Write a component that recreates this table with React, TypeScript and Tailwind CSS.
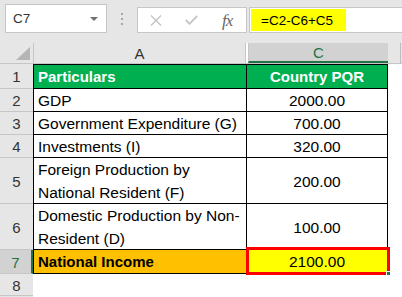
const GRID = 'border-[#c6c6c6]';

function RowHead({ n, h, active }: { n?: number; h: string; active?: boolean }) {
  return (
    <div
      className={`${h} w-[33px] shrink-0 flex items-center justify-center pt-[1px] text-[15px] border-b ${GRID} ${
        active ? 'bg-[#d2d2d2] text-[#217346] border-r-2 border-r-[#217346]' : 'bg-[#e6e6e6] text-[#333]'
      }`}
    >
      {n}
    </div>
  );
}

const body = [
  { n: 2, h: 'h-[23px]', a: ['GDP'], c: '2000.00' },
  { n: 3, h: 'h-[23px]', a: ['Government Expenditure (G)'], c: '700.00' },
  { n: 4, h: 'h-[23px]', a: ['Investments (I)'], c: '320.00' },
  { n: 5, h: 'h-[46px]', a: ['Foreign Production by', 'National Resident (F)'], c: '200.00' },
  { n: 6, h: 'h-[46px]', a: ['Domestic Production by Non-', 'Resident (D)'], c: '100.00' },
];

export default function App() {
  return (
    <div className="w-[402px] h-[297px] overflow-hidden bg-white font-['Liberation_Sans',Arial,sans-serif] text-[15.5px] leading-[23px] text-black">
      {/* formula bar */}
      <div className="h-[43px] bg-[#e6e6e6] flex items-start text-[13.5px]">
        <div className="ml-[5px] mt-[4px] w-[102px] h-[29px] bg-white border border-[#c6c6c6] flex items-center justify-between pl-[7px] pr-[8px] text-[#333]">
          <span>C7</span>
          <svg width="8" height="4" viewBox="0 0 8 4">
            <path d="M0 0 L8 0 L4 4 Z" fill="#707070" />
          </svg>
        </div>
        <div className="w-[30px] h-[29px] mt-[4px] flex flex-col items-center justify-center gap-[3px]">
          <div className="w-[2px] h-[2px] bg-[#a6a6a6]" />
          <div className="w-[2px] h-[2px] bg-[#a6a6a6]" />
          <div className="w-[2px] h-[2px] bg-[#a6a6a6]" />
        </div>
        <div className="mt-[7px] w-[110px] h-[26px] bg-white border border-[#c6c6c6] flex items-center pl-[12px]">
          <svg width="12" height="11" viewBox="0 0 12 11">
            <path d="M1 0.5 L11 10.5 M11 0.5 L1 10.5" stroke="#c4c4c4" strokeWidth="1.4" />
          </svg>
          <svg width="13" height="10" viewBox="0 0 13 10" className="ml-[23px]">
            <path d="M0.8 5 L4.5 8.8 L12.2 0.8" stroke="#c4c4c4" strokeWidth="1.8" fill="none" />
          </svg>
          <span className="ml-[24px] font-['Liberation_Serif',serif] italic text-[17px] text-[#666] tracking-[-1px]">fx</span>
        </div>
        <div className="ml-[2px] mt-[7px] flex-1 h-[26px] bg-white border border-r-0 border-[#c6c6c6] p-[1px]">
          <div className="w-[95px] h-full bg-[#ffff00] pl-[10px] flex items-center">=C2-C6+C5</div>
        </div>
      </div>

      {/* column headers */}
      <div className={`flex h-[21px] bg-[#e6e6e6] border-b ${GRID} text-[15px]`}>
        <div className={`w-[34px] shrink-0 border-r ${GRID} flex items-end justify-end pr-[3px] pb-[3px]`}>
          <svg width="14" height="13" viewBox="0 0 14 13">
            <path d="M14 0 L14 13 L0 13 Z" fill="#b5b5b5" />
          </svg>
        </div>
        <div className={`w-[212px] shrink-0 border-r ${GRID} flex items-center justify-center text-[#333]`}>A</div>
        <div className="w-[2px] shrink-0 bg-white" />
        <div className={`w-[140px] shrink-0 bg-[#d2d2d2] border-l ${GRID} border-b-2 border-b-[#217346] flex items-center justify-center text-[#217346]`}>
          C
        </div>
        <div className="flex-1 border-r border-[#bdbdbd] mr-[1px]" />
      </div>

      {/* row 1 */}
      <div className="flex">
        <RowHead n={1} h="h-[25px]" />
        <div className="h-[25px] w-[214px] shrink-0 bg-[#00b050] border border-black pl-[4px] flex items-center font-bold text-[15px] text-white">
          Particulars
        </div>
        <div className="h-[25px] w-[141px] shrink-0 bg-[#00b050] border-y border-r border-black flex items-center justify-center font-bold text-[15px] text-white">
          Country PQR
        </div>
        <div className="flex-1" />
      </div>

      {body.map(r => (
        <div key={r.n} className="flex">
          <RowHead n={r.n} h={r.h} />
          <div className={`${r.h} w-[214px] shrink-0 border-x border-b border-black pl-[4px] pt-[1px] flex flex-col justify-center whitespace-nowrap overflow-hidden`}>
            {r.a.map(line => (
              <span key={line}>{line}</span>
            ))}
          </div>
          <div className={`${r.h} w-[141px] shrink-0 border-r border-b border-black flex items-center justify-center pt-[1px]`}>
            {r.c}
          </div>
          <div className="flex-1" />
        </div>
      ))}

      {/* row 7 */}
      <div className="flex">
        <RowHead n={7} h="h-[24px]" active />
        <div className="h-[24px] w-[214px] shrink-0 bg-[#ffc000] border-x border-b border-black pl-[4px] flex items-center font-bold text-[15px]">
          National Income
        </div>
        <div className="relative h-[24px] w-[141px] shrink-0 bg-[#ffff00] border-r border-b border-black flex items-center justify-center">
          2100.00
          <div className="absolute top-[-3px] left-[-1px] right-[-3px] bottom-[-2px] border-[3px] border-[#ff0000]" />
          <div className="absolute right-[-4px] bottom-[-3px] w-[5px] h-[5px] bg-[#217346] border border-white" />
        </div>
        <div className="flex-1" />
      </div>

      <div className="flex">
        <RowHead n={8} h="h-[22px]" />
      </div>
      <div className="flex">
        <RowHead h="h-[23px]" />
      </div>
    </div>
  );
}
